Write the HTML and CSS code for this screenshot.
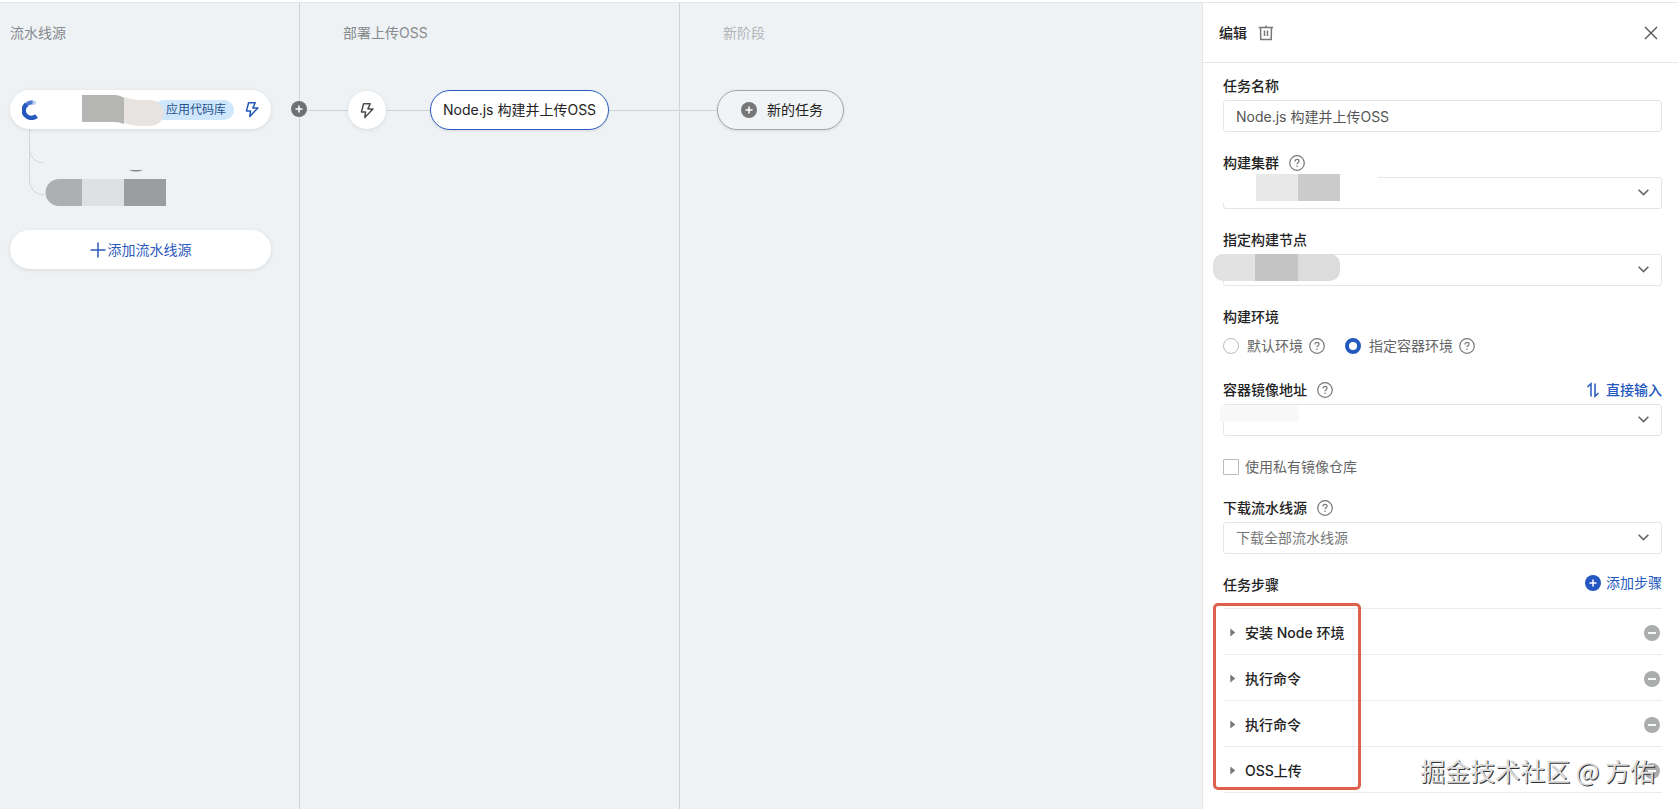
FILE: index.html
```html
<!DOCTYPE html>
<html lang="zh-CN">
<head>
<meta charset="utf-8">
<title>流水线编辑</title>
<link rel="stylesheet" href="styles.css">
</head>
<body>
<svg class="defs" aria-hidden="true">
  <symbol id="bolt" viewBox="0 0 16 16"><path d="M4.6 1.2h6.6L8.9 6.4h5L5.8 14.9l.7-5.3H2.4z" fill="none" stroke="currentColor" stroke-width="1.5" stroke-linejoin="round"/></symbol>
  <symbol id="help" viewBox="0 0 16 16"><circle cx="8" cy="8" r="7.3" fill="none" stroke="currentColor" stroke-width="1.2"/><path d="M6 6.4c0-1.2.8-2 2-2s2 .8 2 1.8c0 1.400-2 1.600-2 3" fill="none" stroke="currentColor" stroke-width="1.2"/><circle cx="8" cy="11.300" r=".8" fill="currentColor"/></symbol>
  <symbol id="plus" viewBox="0 0 16 16"><circle cx="8" cy="8" r="8" fill="currentColor"/><path d="M8 4.500v7M4.500 8h7" stroke="#fff" stroke-width="1.500"/></symbol>
  <symbol id="minus" viewBox="0 0 16 16"><circle cx="8" cy="8" r="8" fill="currentColor"/><path d="M4 8h8" stroke="#fff" stroke-width="1.800"/></symbol>
  <symbol id="chevron" viewBox="0 0 12 12"><path d="M1.500 3.500L6 8l4.500-4.500" fill="none" stroke="currentColor" stroke-width="1.500"/></symbol>
  <symbol id="caret" viewBox="0 0 6 10"><path d="M0 .5L5.500 5 0 9.500z" fill="currentColor"/></symbol>
</svg>
<div class="app">
  <main class="board">
    <section class="lane lane-source">
      <h2 class="lane-title">流水线源</h2>
      <div class="source">
        <svg class="logo" viewBox="0 0 16 20"><path d="M13.500 3.600A7.600 7.600 0 0 0 9 2.200" fill="none" stroke="#b9cdf2" stroke-width="4"/><path d="M10.500 2.500A7.500 7.500 0 0 0 3.300 6.500" fill="none" stroke="#4b78d2" stroke-width="4"/><path d="M4.300 4.500A7.500 7.500 0 0 0 14.500 16" fill="none" stroke="#2559bd" stroke-width="4.400"/></svg>
        <span class="tag">应用代码库</span>
        <svg class="bolt blue"><use href="#bolt"/></svg>
        <svg class="smudge" viewBox="0 0 82 34"><path d="M0 2h32q6 0 10 3v26q-4-2-10-2H0z" fill="#b5b5b4"/><path d="M42 4q8 3 16 3h10a14 13 0 0 1 14 13q-2 13-15 13H58q-8 0-16-3z" fill="#e6e3e1"/></svg>
      </div>
      <div class="branches">
        <svg class="branch-lines" viewBox="0 0 16 68"><path d="M.5 0v20q1 13 14 14M.5 20v32q1 13 15 14" fill="none" stroke="#d3d7da"/></svg>
        <svg class="repo" viewBox="0 0 122 38"><path d="M84 1h14q-7 3-14 0z" fill="#808589"/><path d="M37 10v27H14a13.500 13.500 0 0 1 0-27z" fill="#acb0b2"/><path d="M37 10h42v27H37z" fill="#dde1e4"/><path d="M79 10h42v27H79z" fill="#9a9ea1"/></svg>
      </div>
      <button class="add-source"><svg viewBox="0 0 16 16"><path d="M8 .5v15M.5 8h15" stroke="currentColor" stroke-width="1.500"/></svg>添加流水线源</button>
      <button class="add-stage" aria-label="添加阶段"><svg><use href="#plus"/></svg></button>
    </section>
    <section class="lane lane-deploy">
      <h2 class="lane-title">部署上传OSS</h2>
      <div class="track">
        <span class="line lead"></span>
        <button class="trigger" aria-label="触发设置"><svg class="bolt"><use href="#bolt"/></svg></button>
        <span class="line mid"></span>
        <button class="job">Node.js 构建并上传OSS</button>
        <span class="line rest"></span>
      </div>
    </section>
    <section class="lane lane-new">
      <h2 class="lane-title muted">新阶段</h2>
      <div class="track">
        <span class="line short"></span>
        <button class="new-job"><svg><use href="#plus"/></svg>新的任务</button>
      </div>
    </section>
  </main>
  <aside class="panel">
    <header class="panel-head">
      <h1>编辑</h1>
      <button class="icon-btn" aria-label="删除"><svg class="trash" viewBox="0 0 16 16"><path d="M.8 2.600h14.400M8 .4v2M2.500 2.600l.3 12h10.400l.3-12M6.500 5.500v5.500M9.500 5.500v5.500" fill="none" stroke="currentColor" stroke-width="1.500"/></svg></button>
      <button class="icon-btn close" aria-label="关闭"><svg viewBox="0 0 16 16"><path d="M2 2l12 12M14 2L2 14" stroke="currentColor" stroke-width="1.400"/></svg></button>
    </header>
    <form class="form">
      <div class="field">
        <div class="label-row"><label for="name">任务名称</label></div>
        <input class="control" id="name" type="text" value="Node.js 构建并上传OSS">
      </div>
      <div class="field">
        <div class="label-row"><label for="cluster">构建集群</label><svg class="help"><use href="#help"/></svg></div>
        <div class="select"><select class="control" id="cluster"><option></option></select><svg class="chevron"><use href="#chevron"/></svg>
          <span class="mask mask-cluster"><i></i><i></i></span></div>
      </div>
      <div class="field">
        <div class="label-row"><label for="node">指定构建节点</label></div>
        <div class="select"><select class="control" id="node"><option></option></select><svg class="chevron"><use href="#chevron"/></svg>
          <span class="mask mask-node"><i></i><i></i><i></i></span></div>
      </div>
      <div class="field environment" role="radiogroup" aria-labelledby="env">
        <div class="label-row"><span class="caption" id="env">构建环境</span></div>
        <div class="choices">
          <label><input type="radio" name="env">默认环境<svg class="help"><use href="#help"/></svg></label>
          <label><input type="radio" name="env" checked>指定容器环境<svg class="help"><use href="#help"/></svg></label>
        </div>
      </div>
      <div class="field">
        <div class="label-row"><label for="image">容器镜像地址</label><svg class="help"><use href="#help"/></svg>
          <button type="button" class="text-btn"><svg viewBox="0 0 16 16"><path d="M2.500 5L6 1.800V14.500M10 1.500v12.700l3.500-3.200" fill="none" stroke="currentColor" stroke-width="1.500"/></svg>直接输入</button></div>
        <div class="select"><select class="control" id="image"><option></option></select><svg class="chevron"><use href="#chevron"/></svg>
          <span class="mask mask-image"></span></div>
      </div>
      <div class="field private">
        <label class="check"><input type="checkbox">使用私有镜像仓库</label>
      </div>
      <div class="field">
        <div class="label-row"><label for="download">下载流水线源</label><svg class="help"><use href="#help"/></svg></div>
        <div class="select"><select class="control" id="download"><option>下载全部流水线源</option></select><svg class="chevron"><use href="#chevron"/></svg></div>
      </div>
      <div class="steps">
        <div class="label-row steps-head"><span class="caption">任务步骤</span>
          <button type="button" class="text-btn add-step"><svg><use href="#plus"/></svg>添加步骤</button></div>
        <ul class="step-list">
          <li><button type="button" class="step"><svg><use href="#caret"/></svg>安装 Node 环境</button><button type="button" class="remove" aria-label="移除"><svg><use href="#minus"/></svg></button></li>
          <li><button type="button" class="step"><svg><use href="#caret"/></svg>执行命令</button><button type="button" class="remove" aria-label="移除"><svg><use href="#minus"/></svg></button></li>
          <li><button type="button" class="step"><svg><use href="#caret"/></svg>执行命令</button><button type="button" class="remove" aria-label="移除"><svg><use href="#minus"/></svg></button></li>
          <li><button type="button" class="step"><svg><use href="#caret"/></svg>OSS上传</button><button type="button" class="remove" aria-label="移除"><svg><use href="#minus"/></svg></button></li>
        </ul>
        <span class="highlight"></span>
        <span class="watermark">掘金技术社区 @ 方佑</span>
      </div>
    </form>
  </aside>
</div>
</body>
</html>
```
FILE: styles.css
```css
* { box-sizing: border-box; }

body {
  margin: 0;
  font: 14px/20px Inter, "Noto Sans CJK SC", sans-serif;
  color: #222;
  background: #fff;
}

button {
  font: inherit;
  color: inherit;
  border: 0;
  background: none;
  padding: 0;
  display: flex;
  align-items: center;
  cursor: pointer;
}

h1, h2, ul { margin: 0; padding: 0; font: inherit; list-style: none; }
svg { display: block; flex: none; width: 16px; height: 16px; }
.defs { position: absolute; width: 0; height: 0; }

.app {
  display: flex;
  min-height: 100vh;
  padding-top: 2px;
}

/* pipeline board */
.board {
  flex: 1;
  display: flex;
  background: #eef2f5;
  border-top: 1px solid #e3e6e8;
}
.lane {
  position: relative;
  padding-top: 20px;
  border-right: 1px solid #cfd3d7;
}
.lane-source { width: 300px; padding-left: 10px; padding-right: 28px; z-index: 1; }
.lane-deploy { width: 380px; }
.lane-new { flex: 1; border-right: 0; }
.lane-title { color: #868a8d; margin-bottom: 47px; }
.lane-deploy .lane-title, .lane-new .lane-title { padding-left: 43px; }
.lane-title.muted { color: #b2b5b8; }

.source, .add-source {
  width: 100%;
  height: 39px;
  border-radius: 20px;
  background: #fff;
  box-shadow: 0 1px 4px rgba(0, 0, 0, .1);
}
.source {
  position: relative;
  display: flex;
  align-items: center;
  padding: 0 11px 0 12px;
}
.logo { width: 16px; height: 20px; }
.tag {
  margin-left: auto;
  padding: 0 8px 0 12px;
  border-radius: 10px;
  background: #cee7fc;
  color: #29518b;
  font-size: 12px;
}
.bolt { width: 16px; height: 17px; color: #4d4d4d; }
.bolt.blue { color: #2458b8; margin-left: 10px; }
.smudge { position: absolute; left: 72px; top: 3px; width: 82px; height: 34px; }

.branches { display: flex; padding-left: 19px; height: 101px; }
.branch-lines { width: 16px; height: 68px; }
.repo { width: 122px; height: 38px; margin-top: 40px; }

.add-source { justify-content: center; color: #2d59bd; }
.add-source svg { margin-right: 2px; }
.add-stage {
  position: absolute;
  right: -8px;
  top: 98px;
  color: #6e7173;
}

.track { display: flex; align-items: center; height: 40px; }
.line { height: 1px; background: #cfd3d7; }
.lead { width: 48px; }
.mid { width: 44px; }
.rest { flex: 1; }
.short { width: 37px; }
.trigger {
  width: 38px;
  height: 38px;
  border-radius: 50%;
  justify-content: center;
  background: #fff;
  box-shadow: 0 1px 4px rgba(0, 0, 0, .1);
}
.job, .new-job {
  height: 40px;
  border-radius: 20px;
  white-space: nowrap;
  box-shadow: 0 1px 3px rgba(0, 0, 0, .1);
}
.job { padding: 0 12px; background: #fff; border: 1px solid #2c5bc0; }
.new-job { padding: 0 20px 0 23px; gap: 10px; background: #f0f4f7; border: 1px solid #a3a7aa; }
.new-job svg { color: #777; }

/* edit panel */
.panel { width: 476px; border-left: 1px solid #e3e5e6; border-top: 1px solid #e6e6e6; background: #fff; }
.panel-head {
  display: flex;
  align-items: center;
  height: 60px;
  padding: 0 19px 0 16px;
  border-bottom: 1px solid #e6e7e8;
}
.panel-head h1 { font-weight: 500; margin-right: 11px; }
.icon-btn { color: #555; }
.trash { color: #777; }
.close { margin-left: auto; }

.form { padding: 9px 16px 17px 20px; }
.field { margin-bottom: 17px; }
.label-row { display: flex; align-items: center; height: 28px; font-weight: 500; }
.help { margin-left: 10px; color: #777; }
.control {
  display: block;
  width: 100%;
  height: 32px;
  padding: 0 12px;
  border: 1px solid #e4e5e6;
  border-radius: 3px;
  background: #fff;
  font: inherit;
  color: #555;
  appearance: none;
}
.select { position: relative; }
.select .control { color: #777; }
.chevron { position: absolute; right: 12px; top: 9px; width: 13px; height: 13px; color: #666; }
.environment { margin-bottom: 15px; }
.choices { display: flex; gap: 20px; height: 30px; }
.choices label, .check { display: flex; align-items: center; color: #666; }
.choices .help { margin-left: 6px; }
.choices input, .check input {
  appearance: none;
  width: 16px;
  height: 16px;
  margin: 0 8px 0 0;
  border: 1px solid #bbb;
  background: #fff;
}
.choices input { border-radius: 50%; }
.choices input:checked { border: 4px solid #2459bd; }
.check { height: 28px; }
.check input { margin-right: 6px; border-radius: 1px; }
.private { margin-bottom: 13px; }
.text-btn { margin-left: auto; gap: 5px; color: #2458c0; font-weight: 500; }
.add-step { align-self: flex-start; height: 24px; font-weight: 400; }

/* redacted values */
.mask { position: absolute; display: flex; pointer-events: none; }
.mask-cluster { left: -3px; top: -5px; width: 158px; height: 31px; padding: 2px 0 2px 36px; background: #fefefe; }
.mask-cluster i { width: 42px; background: #e8e8e8; }
.mask-cluster i + i { background: #cbcbcb; }
.mask-node { left: -10px; top: 0; width: 127px; height: 27px; border-radius: 10px; overflow: hidden; }
.mask-node i { flex: 1; background: #e2e2e2; }
.mask-node i:nth-child(2) { background: #c5c5c5; }
.mask-node i:nth-child(3) { background: #dcdcdc; }
.mask-image { left: -3px; top: 1px; width: 79px; height: 17px; background: #f9f9f9; border-radius: 3px; }

.steps { position: relative; }
.steps-head { margin-bottom: 9px; }
.step-list { border-top: 1px solid #ebebeb; }
.step-list li {
  display: flex;
  align-items: center;
  height: 46px;
  padding: 2px 2px 0 7px;
  border-bottom: 1px solid #ebebeb;
}
.step { flex: 1; font-weight: 500; }
.step svg { width: 6px; height: 9px; margin-right: 9px; color: #777; }
.remove { color: #aaacae; }
.highlight {
  position: absolute;
  left: -10px;
  top: 32px;
  width: 148px;
  height: 187px;
  border: 3px solid #de614e;
  border-radius: 5px;
  pointer-events: none;
}
.watermark {
  position: absolute;
  right: 7px;
  bottom: 5px;
  font: 25px/36px "Noto Sans CJK SC", sans-serif;
  color: #ddd;
  text-shadow: 1px 1px 0 #333;
  white-space: nowrap;
  pointer-events: none;
}
```
